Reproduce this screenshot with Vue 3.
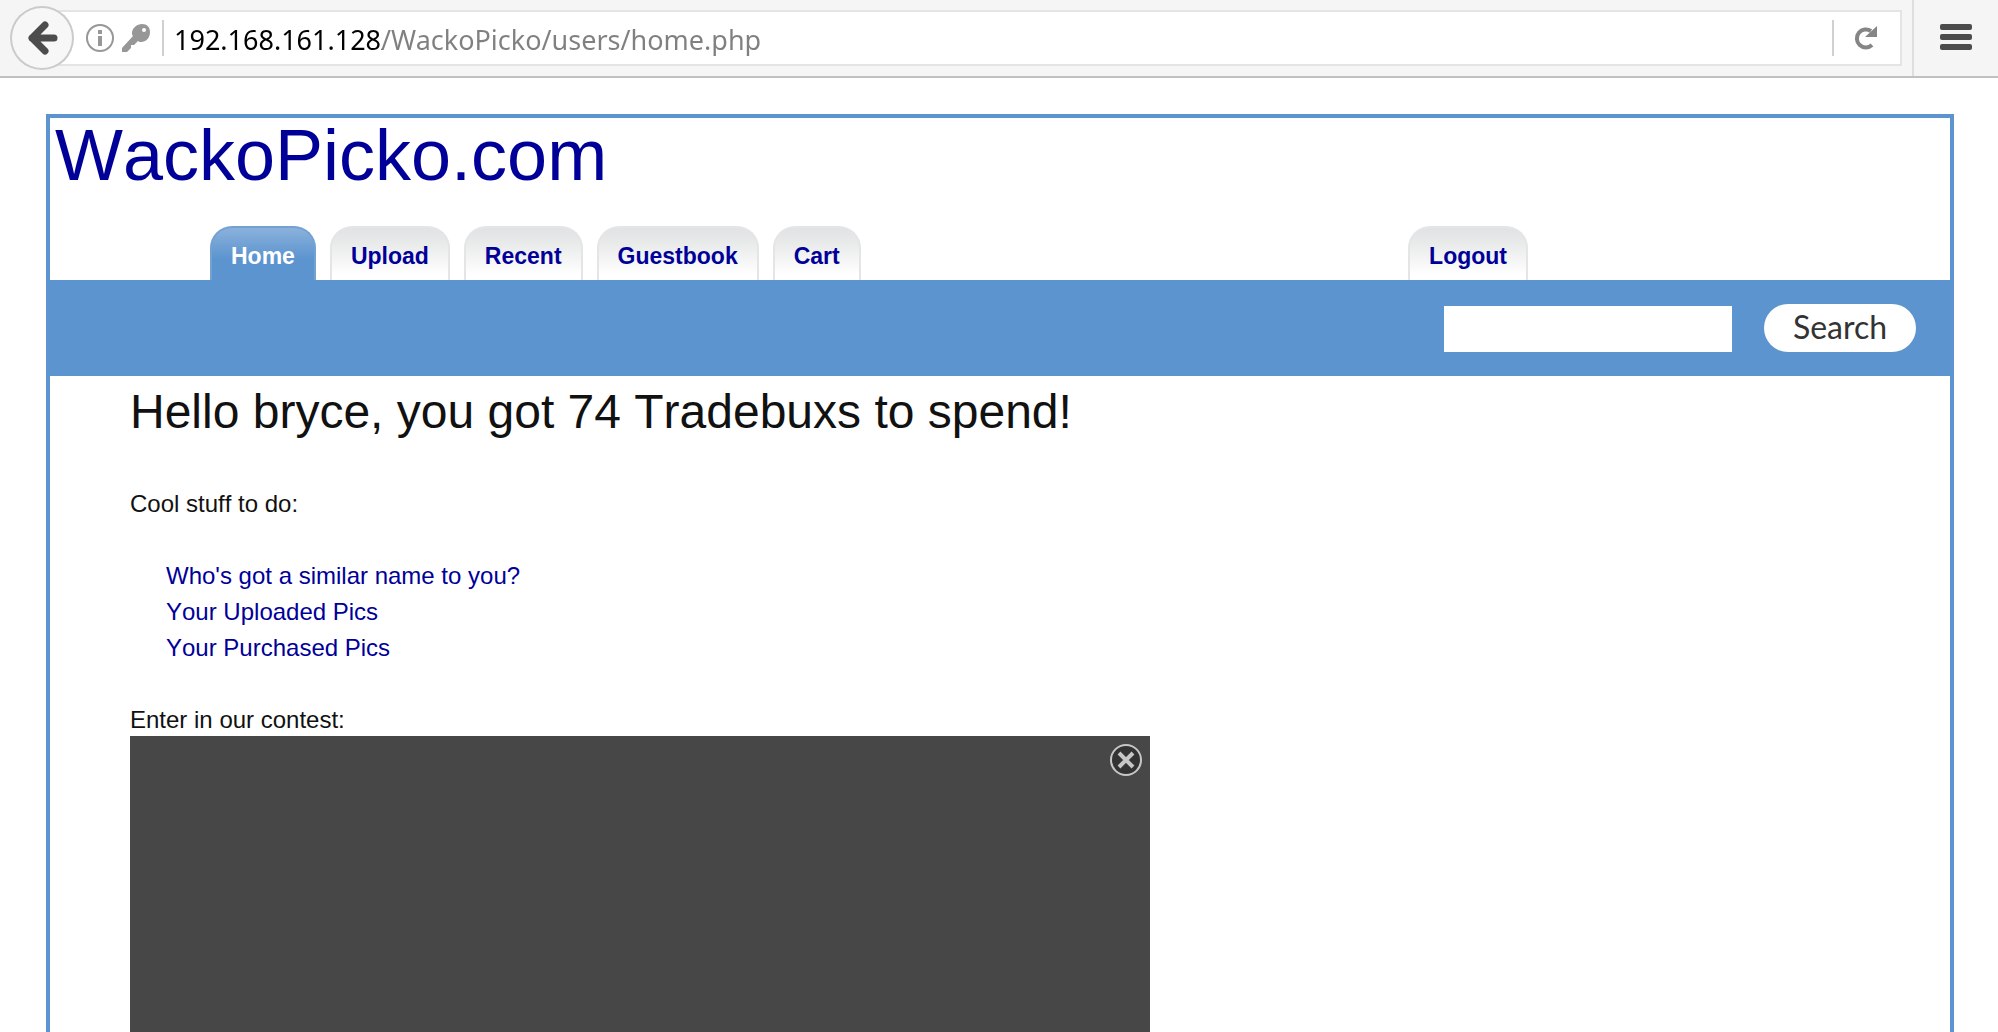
<script setup>
import { ref } from 'vue'

const address = ref('192.168.161.128/WackoPicko/users/home.php')
const query = ref('')
const playerOpen = ref(true)

const tabs = [
  { label: 'Home', active: true },
  { label: 'Upload' },
  { label: 'Recent' },
  { label: 'Guestbook' },
  { label: 'Cart' },
]

const links = [
  "Who's got a similar name to you?",
  'Your Uploaded Pics',
  'Your Purchased Pics',
]
</script>

<template>
  <div class="window">
    <header class="toolbar">
      <button class="back" type="button" aria-label="Back">
        <svg viewBox="0 0 64 64" width="64" height="64" aria-hidden="true">
          <path d="M35 19 L22 32 L35 45 M22 32 H44" fill="none" stroke="#4c4c4c" stroke-width="7" stroke-linecap="round" stroke-linejoin="round" />
        </svg>
      </button>
      <div class="urlbar">
        <svg class="info" viewBox="0 0 28 28" width="28" height="28" aria-hidden="true">
          <circle cx="14" cy="14" r="13" fill="none" stroke="#979797" stroke-width="2" />
          <path d="M12 6h4v4h-4z M12 12h4v10h-4z" fill="#979797" />
        </svg>
        <svg class="key" viewBox="0 0 28 28" width="28" height="28" aria-hidden="true">
          <path
            fill="#979797"
            fill-rule="evenodd"
            d="M20 0c5 0 8 3 8 8 0 6-4 10-9 10-1 0-2 0-3-1l-4 4H9v3l-4 4H0v-4l11-12c-1-1-1-2-1-3 0-5 5-9 10-9z M22 4a2 2 0 1 0 0 4 2 2 0 0 0 0-4z"
          />
        </svg>
        <input v-model="address" class="address" type="text" aria-label="Address" spellcheck="false" />
        <button class="reload" type="button" aria-label="Reload">
          <svg viewBox="0 0 24 26" width="24" height="26" aria-hidden="true">
            <path d="M18 20A9 9 0 1 1 17 6" fill="none" stroke="#858585" stroke-width="4" />
            <path d="M23 1V12H11z" fill="#858585" />
          </svg>
        </button>
      </div>
      <button class="menu" type="button" aria-label="Open menu">
        <svg viewBox="0 0 32 26" width="32" height="26" aria-hidden="true">
          <g fill="#4c4c4c">
            <rect width="32" height="6" rx="2" />
            <rect y="10" width="32" height="6" rx="2" />
            <rect y="20" width="32" height="6" rx="2" />
          </g>
        </svg>
      </button>
    </header>

    <main class="site">
      <h1 class="logo"><a href="#">WackoPicko.com</a></h1>
      <nav class="tabs">
        <a v-for="tab in tabs" :key="tab.label" href="#" class="tab" :class="{ active: tab.active }">{{ tab.label }}</a>
        <a href="#" class="tab logout">Logout</a>
      </nav>
      <form class="search" @submit.prevent>
        <input v-model="query" class="query" type="text" aria-label="Search pictures" />
        <button class="go" type="submit">Search</button>
      </form>
      <section class="content">
        <h2 class="greeting">Hello bryce, you got 74 Tradebuxs to spend!</h2>
        <p class="text">Cool stuff to do:</p>
        <ul class="links">
          <li v-for="link in links" :key="link"><a href="#">{{ link }}</a></li>
        </ul>
        <p class="text">Enter in our contest:</p>
        <div v-if="playerOpen" class="player">
          <button class="close" type="button" aria-label="Close" @click="playerOpen = false">
            <svg viewBox="0 0 32 32" width="32" height="32" aria-hidden="true">
              <circle cx="16" cy="16" r="15" fill="#333" stroke="#c6c6c6" stroke-width="2" />
              <path d="M9 9 23 23 M23 9 9 23" stroke="#c6c6c6" stroke-width="4" />
            </svg>
          </button>
        </div>
      </section>
    </main>
  </div>
</template>

<style>
body {
  margin: 0;
  background: #fff;
}
</style>

<style scoped>
.window {
  display: flex;
  flex-direction: column;
  min-height: 100vh;
  color: #111;
  font-family: "Liberation Sans", Arial, sans-serif;
  font-kerning: none;
}

button,
input {
  box-sizing: border-box;
  margin: 0;
  padding: 0;
  border: 0;
  border-radius: 0;
  outline: 0;
  background: none;
}

button {
  cursor: pointer;
}

svg {
  display: block;
}

a {
  color: #000099;
  text-decoration: none;
}

/* Browser toolbar */
.toolbar {
  display: flex;
  align-items: center;
  height: 76px;
  padding-left: 10px;
  border-bottom: 2px solid #c1c1c1;
  background: #f5f5f5;
}

.back {
  z-index: 1;
  flex: none;
  width: 64px;
  height: 64px;
  border-radius: 50%;
  background: #f7f7f7;
  box-shadow: inset 0 0 0 2px #cbcbcb;
}

.urlbar {
  box-sizing: border-box;
  display: flex;
  flex: 1;
  align-items: center;
  height: 56px;
  margin-left: -24px;
  padding-left: 34px;
  border: 2px solid #e4e4e4;
  background: #fff;
}

.key {
  margin: 0 12px 0 8px;
}

/* The host is drawn darker than the path that follows it */
.address {
  flex: 1;
  min-width: 0;
  height: 36px;
  padding: 2px 0 0 10px;
  border-left: 2px solid #d0d0d0;
  background: linear-gradient(to right, #000 218px, #808080 218px);
  background-clip: text;
  -webkit-background-clip: text;
  color: transparent;
  font: 27px "Noto Sans", sans-serif;
}

.reload {
  display: flex;
  align-items: center;
  width: 68px;
  height: 36px;
  padding-left: 20px;
  border-left: 2px solid #d0d0d0;
}

.menu {
  display: flex;
  flex: none;
  align-items: center;
  justify-content: center;
  width: 86px;
  height: 76px;
  margin-left: 10px;
  padding-bottom: 2px;
  border-left: 2px solid #dedede;
}

/* Site */
.site {
  display: flex;
  flex: 1;
  flex-direction: column;
  margin: 36px 44px 0 46px;
  border: 4px solid #5c94cf;
  border-bottom: 0;
}

.logo {
  margin: 0 0 34px;
  padding-left: 5px;
  font-size: 72px;
  font-weight: 400;
  line-height: 74px;
}

.tabs {
  display: flex;
  gap: 14px;
  padding: 0 422px 0 160px;
}

.tab {
  box-sizing: border-box;
  height: 54px;
  padding: 0 19px;
  border: 2px solid #e4e5e6;
  border-bottom: 0;
  border-radius: 22px 22px 0 0;
  background: linear-gradient(#e0e2e4, #e9eaea 30%, #fff 90%);
  font-size: 23px;
  font-weight: 700;
  line-height: 56px;
}

.tab.active {
  border-color: #73a1d2;
  background: linear-gradient(#8ab1dc, #5c94cf 60%);
  color: #fff;
}

.logout {
  margin-left: auto;
}

.search {
  display: flex;
  align-items: center;
  justify-content: flex-end;
  gap: 32px;
  height: 96px;
  padding-right: 34px;
  background: #5c94cf;
}

.query {
  width: 288px;
  height: 46px;
  margin-top: 2px;
  background: #fff;
  font: 24px "Liberation Sans", Arial, sans-serif;
}

.go {
  width: 152px;
  height: 48px;
  padding-bottom: 2px;
  border-radius: 24px;
  background: #fff;
  color: #333;
  font: 32px/44px Lato, sans-serif;
}

.content {
  display: flex;
  flex: 1;
  flex-direction: column;
  padding-left: 80px;
  font-size: 24px;
  line-height: 36px;
}

.greeting {
  margin: 0 0 38px;
  font-size: 48px;
  font-weight: 400;
  line-height: 72px;
}

.text {
  margin: 0;
}

.links {
  margin: 36px 0;
  padding: 0 0 0 36px;
  list-style: none;
}

.player {
  position: relative;
  flex: 1;
  width: 1020px;
  max-width: 100%;
  min-height: 240px;
  margin-top: -2px;
  background: #474747;
}

.close {
  position: absolute;
  top: 8px;
  right: 8px;
}
</style>
